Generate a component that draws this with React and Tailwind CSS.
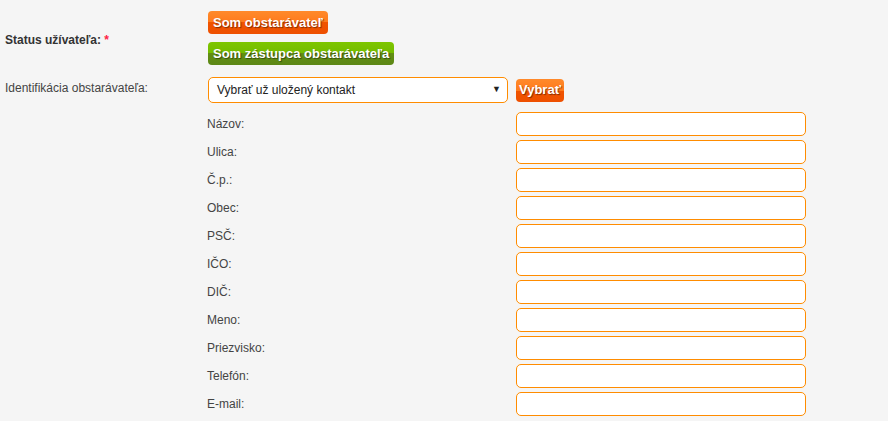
import React from 'react';

const fields = ['Názov:', 'Ulica:', 'Č.p.:', 'Obec:', 'PSČ:', 'IČO:', 'DIČ:', 'Meno:', 'Priezvisko:', 'Telefón:', 'E-mail:'];

const App = () => {
  return (
    <div className="min-h-screen bg-[#f5f5f5] font-['Liberation_Sans',Arial,sans-serif] text-[12px] text-[#444]">
      {/* Status */}
      <div className="flex items-center pt-[11px]">
        <div className="w-[208px] pl-[5px] pt-[4px] font-bold text-[#333]">
          Status užívateľa: <span className="text-[#ff2244]">*</span>
        </div>
        <div className="flex flex-col items-start gap-[8px]">
          <button className="h-[23px] px-[5px] rounded-[4px] bg-[linear-gradient(#ff8a2b_0%,#ff7a1c_50%,#f05400_50%,#ee5000_100%)] text-white font-bold text-[13px] [text-shadow:1px_1px_1px_rgba(0,0,0,0.45)]">
            Som obstarávateľ
          </button>
          <button className="h-[23px] px-[5px] rounded-[4px] bg-[linear-gradient(#7ec600_0%,#73bb00_50%,#628f12_50%,#5c8716_100%)] text-white font-bold text-[13px] [text-shadow:1px_1px_1px_rgba(0,0,0,0.45)]">
            Som zástupca obstarávateľa
          </button>
        </div>
      </div>

      {/* Identifikácia */}
      <div className="flex items-center mt-[12px]">
        <div className="w-[208px] pl-[5px] pb-[4px]">Identifikácia obstarávateľa:</div>
        <div className="w-[300px] h-[26px] bg-white border border-[#ff8c00] rounded-[5px] flex items-center justify-between pl-[8px] pr-[6px] text-[#222]">
          <span>Vybrať už uložený kontakt</span>
          <span className="text-[9px]">▼</span>
        </div>
        <button className="ml-[8px] h-[23px] px-[3px] rounded-[4px] bg-[linear-gradient(#ff8a2b_0%,#ff7a1c_50%,#f05400_50%,#ee5000_100%)] text-white font-bold text-[13px] [text-shadow:1px_1px_1px_rgba(0,0,0,0.45)]">
          Vybrať
        </button>
      </div>

      {/* Fields */}
      <div className="pl-[207px] pt-[7px]">
        {fields.map((f) => (
          <div key={f} className="flex items-center h-[28px]">
            <div className="w-[309px]">{f}</div>
            <div className="w-[290px] h-[24px] bg-white border border-[#ff8c00] rounded-[5px]" />
          </div>
        ))}
      </div>
    </div>
  );
};

export default App;
